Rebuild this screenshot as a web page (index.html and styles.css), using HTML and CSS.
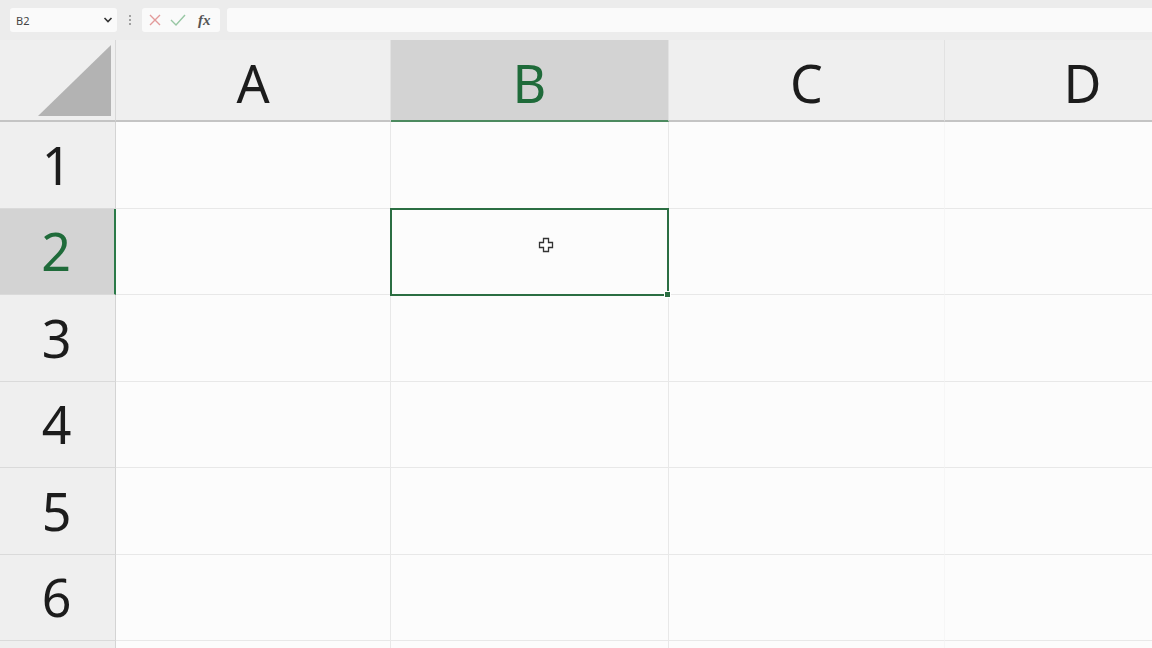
FILE: index.html
```html
<!DOCTYPE html>
<html lang="en">
<head>
<meta charset="UTF-8">
<title>Sheet</title>
<link rel="stylesheet" href="styles.css">
</head>
<body>
<div class="formula-bar">
    <div class="name-box">
        <span>B2</span>
        <svg width="10" height="6" viewBox="0 0 10 6"><path d="M1.5 1 L5 4.5 L8.5 1" fill="none" stroke="#333" stroke-width="1.6"/></svg>
    </div>
    <div class="grip">
        <svg width="4" height="12" viewBox="0 0 4 12"><circle cx="2" cy="2" r="1" fill="#888"/><circle cx="2" cy="6" r="1" fill="#888"/><circle cx="2" cy="10" r="1" fill="#888"/></svg>
    </div>
    <div class="fx-buttons">
        <svg width="14" height="14" viewBox="0 0 14 14"><path d="M2 2 L12 12 M12 2 L2 12" stroke="#e39a9a" stroke-width="1.4"/></svg>
        <svg width="16" height="14" viewBox="0 0 16 14"><path d="M1 7 L6 12 L15 2" fill="none" stroke="#98c7a4" stroke-width="1.4"/></svg>
        <span class="fx">fx</span>
    </div>
    <div class="formula-input"></div>
</div>

<div class="sheet">
    <div class="corner"><div class="select-all"></div></div>
    <div class="col-head">A</div>
    <div class="col-head active">B</div>
    <div class="col-head">C</div>
    <div class="col-head">D</div>

    <div class="row-head">1</div>
    <div class="cell"></div><div class="cell"></div><div class="cell"></div><div class="cell"></div>

    <div class="row-head active">2</div>
    <div class="cell"></div>
    <div class="cell selected">
        <span class="fill-handle"></span>
        <svg class="cursor" width="16" height="16" viewBox="0 0 16 16"><path d="M5.5 1.5 H10.5 V5.5 H14.5 V10.5 H10.5 V14.5 H5.5 V10.5 H1.5 V5.5 H5.5 Z" fill="#fff" stroke="#333" stroke-width="1.3"/></svg>
    </div>
    <div class="cell"></div><div class="cell"></div>

    <div class="row-head">3</div>
    <div class="cell"></div><div class="cell"></div><div class="cell"></div><div class="cell"></div>

    <div class="row-head">4</div>
    <div class="cell"></div><div class="cell"></div><div class="cell"></div><div class="cell"></div>

    <div class="row-head">5</div>
    <div class="cell"></div><div class="cell"></div><div class="cell"></div><div class="cell"></div>

    <div class="row-head">6</div>
    <div class="cell"></div><div class="cell"></div><div class="cell"></div><div class="cell"></div>

    <div class="row-head"></div>
    <div class="cell"></div><div class="cell"></div><div class="cell"></div><div class="cell"></div>
</div>
</body>
</html>
```

FILE: styles.css
```css
body {
    margin: 0;
    padding: 0;
    width: 1152px;
    height: 648px;
    overflow: hidden;
    background-color: #eeeeee;
    font-family: 'Noto Sans', 'Open Sans', sans-serif;
    color: #1c1c1c;
}
.formula-bar {
    display: flex;
    align-items: center;
    height: 40px;
    padding: 0 0 0 10px;
    box-sizing: border-box;
    background-color: #ececec;
}
.name-box {
    display: flex;
    align-items: center;
    justify-content: space-between;
    width: 107px;
    height: 24px;
    padding: 0 4px 0 6px;
    box-sizing: border-box;
    background-color: #fafafa;
    border-radius: 3px;
    font-size: 11px;
    color: #444;
}
.grip {
    display: flex;
    align-items: center;
    width: 25px;
    justify-content: center;
}
.fx-buttons {
    display: flex;
    align-items: center;
    gap: 8px;
    width: 78px;
    height: 24px;
    padding: 0 6px;
    box-sizing: border-box;
    background-color: #fafafa;
    border-radius: 3px;
}
.fx {
    font-family: 'Liberation Serif', serif;
    font-style: italic;
    font-weight: bold;
    font-size: 15px;
    color: #555;
    margin-left: 4px;
}
.formula-input {
    flex: 1;
    height: 24px;
    margin-left: 7px;
    background-color: #fafafa;
    border-radius: 3px 0 0 3px;
}
.sheet {
    display: grid;
    grid-template-columns: 116px 275px 278px 276px 276px;
    grid-template-rows: 82px repeat(7, 86.5px);
    width: 1221px;
}
.corner {
    display: flex;
    align-items: flex-end;
    justify-content: flex-end;
    padding: 0 4px 4px 0;
    background-color: #efefef;
    border-bottom: 2px solid #c4c4c4;
    border-right: 1px solid #d8d8d8;
}
.select-all {
    width: 73px;
    height: 71px;
    background-color: #b3b3b3;
    clip-path: polygon(100% 0, 100% 100%, 0 100%);
}
.col-head {
    display: flex;
    align-items: center;
    justify-content: center;
    padding-top: 6px;
    background-color: #efefef;
    border-bottom: 2px solid #c4c4c4;
    border-right: 1px solid #e2e2e2;
    font-size: 52px;
    line-height: 1;
}
.col-head.active {
    background-color: #d3d3d3;
    border-bottom-color: #4c8a5f;
    color: #1f6b3a;
}
.row-head {
    display: flex;
    align-items: center;
    justify-content: center;
    padding-right: 2px;
    background-color: #efefef;
    border-bottom: 1px solid #dadada;
    border-right: 1px solid #d4d4d4;
    font-size: 52px;
    line-height: 1;
}
.row-head.active {
    background-color: #d3d3d3;
    border-right: 2px solid #2b7a48;
    color: #1f6b3a;
}
.cell {
    background-color: #fcfcfc;
    border-bottom: 1px solid #e8e8e8;
    border-right: 1px solid #e8e8e8;
}
.cell:nth-child(5n+4) {
    border-right-color: #f6f6f6;
}
.cell.selected {
    position: relative;
    border: 2px solid #2b6e42;
    margin: -1px 0 -1px -1px;
}
.fill-handle {
    position: absolute;
    right: -4px;
    bottom: -4px;
    width: 5px;
    height: 5px;
    background-color: #2b6e42;
    border: 1px solid #fff;
}
.cursor {
    position: absolute;
    left: 146px;
    top: 27px;
}
```
